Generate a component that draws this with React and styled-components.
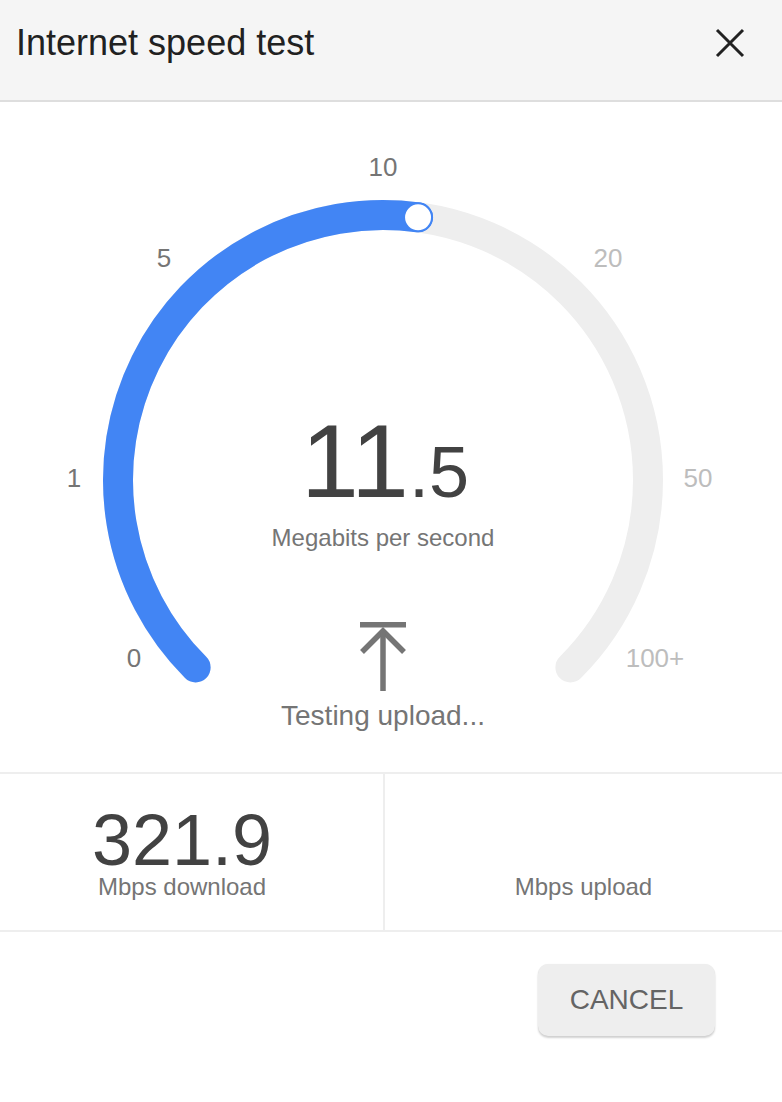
import React from "react";
import styled, { createGlobalStyle } from "styled-components";

const GlobalStyle = createGlobalStyle`
  html, body { margin: 0; padding: 0; background: #ffffff; }
  body { font-family: "Liberation Sans", Arial, Helvetica, sans-serif; }
  * { box-sizing: border-box; }
`;

const Dialog = styled.div`
  width: 782px;
  min-height: 1102px;
  background: #fff;
  display: flex;
  flex-direction: column;
`;

const Header = styled.header`
  height: 102px;
  background: #f5f5f5;
  border-bottom: 2px solid #dedede;
  display: flex;
  align-items: flex-start;
  justify-content: space-between;
  padding: 19px 28px 0 16px;
`;

const Title = styled.h1`
  margin: 0;
  font-size: 36px;
  line-height: 48px;
  font-weight: 400;
  color: #212121;
`;

const CloseButton = styled.button`
  width: 48px;
  height: 48px;
  border: none;
  background: transparent;
  padding: 0;
  display: flex;
  align-items: center;
  justify-content: center;
  cursor: pointer;
`;

const GaugeSection = styled.section`
  position: relative;
  height: 670px;
  display: flex;
  flex-direction: column;
  align-items: center;
  padding: 306px 16px 0 0;
`;

const GaugeSvg = styled.svg`
  position: absolute;
  left: 0;
  top: 0;
  width: 782px;
  height: 670px;
  pointer-events: none;
`;

const Tick = styled.text`
  font-family: "Liberation Sans", Arial, sans-serif;
  font-size: 26px;
  fill: ${(p) => (p.$passed ? "#757575" : "#bdbdbd")};
`;

const Readout = styled.div`
  position: relative;
  display: flex;
  flex-direction: column;
  align-items: center;
`;

const Speed = styled.div`
  font-size: 104px;
  line-height: 106px;
  color: #424242;
  padding-left: 4px;
`;

const SpeedFraction = styled.span`
  font-size: 72px;
`;

const Unit = styled.div`
  font-size: 24px;
  line-height: 28px;
  color: #757575;
  margin-top: -1px;
`;

const UploadIcon = styled.svg`
  margin-top: 67px;
  display: block;
`;

const Status = styled.div`
  font-size: 28px;
  line-height: 30px;
  color: #757575;
  margin-top: 10px;
`;

const Stats = styled.div`
  display: grid;
  grid-template-columns: 383px 1fr;
  border-top: 2px solid #eeeeee;
  border-bottom: 2px solid #eeeeee;
`;

const StatCell = styled.div`
  display: flex;
  flex-direction: column;
  align-items: center;
  padding: 34px ${(p) => (p.$first ? "19px" : "0")} 31px 0;
  border-left: ${(p) => (p.$first ? "none" : "2px solid #eeeeee")};
`;

const StatValue = styled.div`
  font-size: 72px;
  line-height: 64px;
  height: 64px;
  color: #424242;
`;

const StatLabel = styled.div`
  font-size: 24px;
  line-height: 24px;
  color: #757575;
  margin-top: 3px;
`;

const Footer = styled.div`
  display: flex;
  justify-content: flex-end;
  padding: 32px 67px 0 0;
`;

const CancelButton = styled.button`
  width: 177px;
  height: 72px;
  border: none;
  border-radius: 10px;
  background: #eeeeee;
  box-shadow: 0 2px 2px rgba(0, 0, 0, 0.18), 0 0 1px rgba(0, 0, 0, 0.08);
  font-family: "Liberation Sans", Arial, sans-serif;
  font-size: 28px;
  color: #646464;
  letter-spacing: 0;
  cursor: pointer;
`;

const CX = 383;
const CY = 378;
const R = 265;

function pt(deg, r = R) {
  const a = (deg * Math.PI) / 180;
  return [CX + r * Math.sin(a), CY - r * Math.cos(a)];
}

function arc(from, to) {
  const [x1, y1] = pt(from);
  const [x2, y2] = pt(to);
  const large = to - from > 180 ? 1 : 0;
  return `M ${x1} ${y1} A ${R} ${R} 0 ${large} 1 ${x2} ${y2}`;
}

const ticks = [
  { label: "0", x: 134, y: 564.5, passed: true },
  { label: "1", x: 74, y: 384.5, passed: true },
  { label: "5", x: 164, y: 164.5, passed: true },
  { label: "10", x: 383, y: 73.5, passed: true },
  { label: "20", x: 608, y: 164.5, passed: false },
  { label: "50", x: 698, y: 384.5, passed: false },
  { label: "100+", x: 655, y: 564.5, passed: false },
];

export default function App() {
  const progress = 7.6;
  const [dx, dy] = pt(progress);
  return (
    <>
      <GlobalStyle />
      <Dialog>
        <Header>
          <Title>Internet speed test</Title>
          <CloseButton aria-label="Close">
            <svg width="30" height="30" viewBox="0 0 30 30">
              <path d="M2 2 L28 28 M28 2 L2 28" stroke="#212121" strokeWidth="3" fill="none" />
            </svg>
          </CloseButton>
        </Header>

        <GaugeSection>
          <GaugeSvg viewBox="0 0 782 670">
            <path d={arc(-135, 135)} stroke="#eeeeee" strokeWidth="30" fill="none" strokeLinecap="round" />
            <path d={arc(-135, progress)} stroke="#4285f4" strokeWidth="30" fill="none" strokeLinecap="round" />
            <circle cx={dx} cy={dy} r="14" fill="#ffffff" stroke="#4285f4" strokeWidth="2" />
            {ticks.map((t) => (
              <Tick key={t.label} x={t.x} y={t.y} textAnchor="middle" $passed={t.passed}>
                {t.label}
              </Tick>
            ))}
          </GaugeSvg>
          <Readout>
            <Speed>
              11<SpeedFraction>.5</SpeedFraction>
            </Speed>
            <Unit>Megabits per second</Unit>
            <UploadIcon width="48" height="72" viewBox="0 0 48 72">
              <rect x="1" y="3" width="46" height="5.5" fill="#757575" />
              <path d="M3 33 L24 12 L45 33" stroke="#757575" strokeWidth="5.5" fill="none" />
              <path d="M24 13 L24 72" stroke="#757575" strokeWidth="5.5" fill="none" />
            </UploadIcon>
            <Status>Testing upload...</Status>
          </Readout>
        </GaugeSection>

        <Stats>
          <StatCell $first>
            <StatValue>321.9</StatValue>
            <StatLabel>Mbps download</StatLabel>
          </StatCell>
          <StatCell>
            <StatValue />
            <StatLabel>Mbps upload</StatLabel>
          </StatCell>
        </Stats>

        <Footer>
          <CancelButton>CANCEL</CancelButton>
        </Footer>
      </Dialog>
    </>
  );
}
